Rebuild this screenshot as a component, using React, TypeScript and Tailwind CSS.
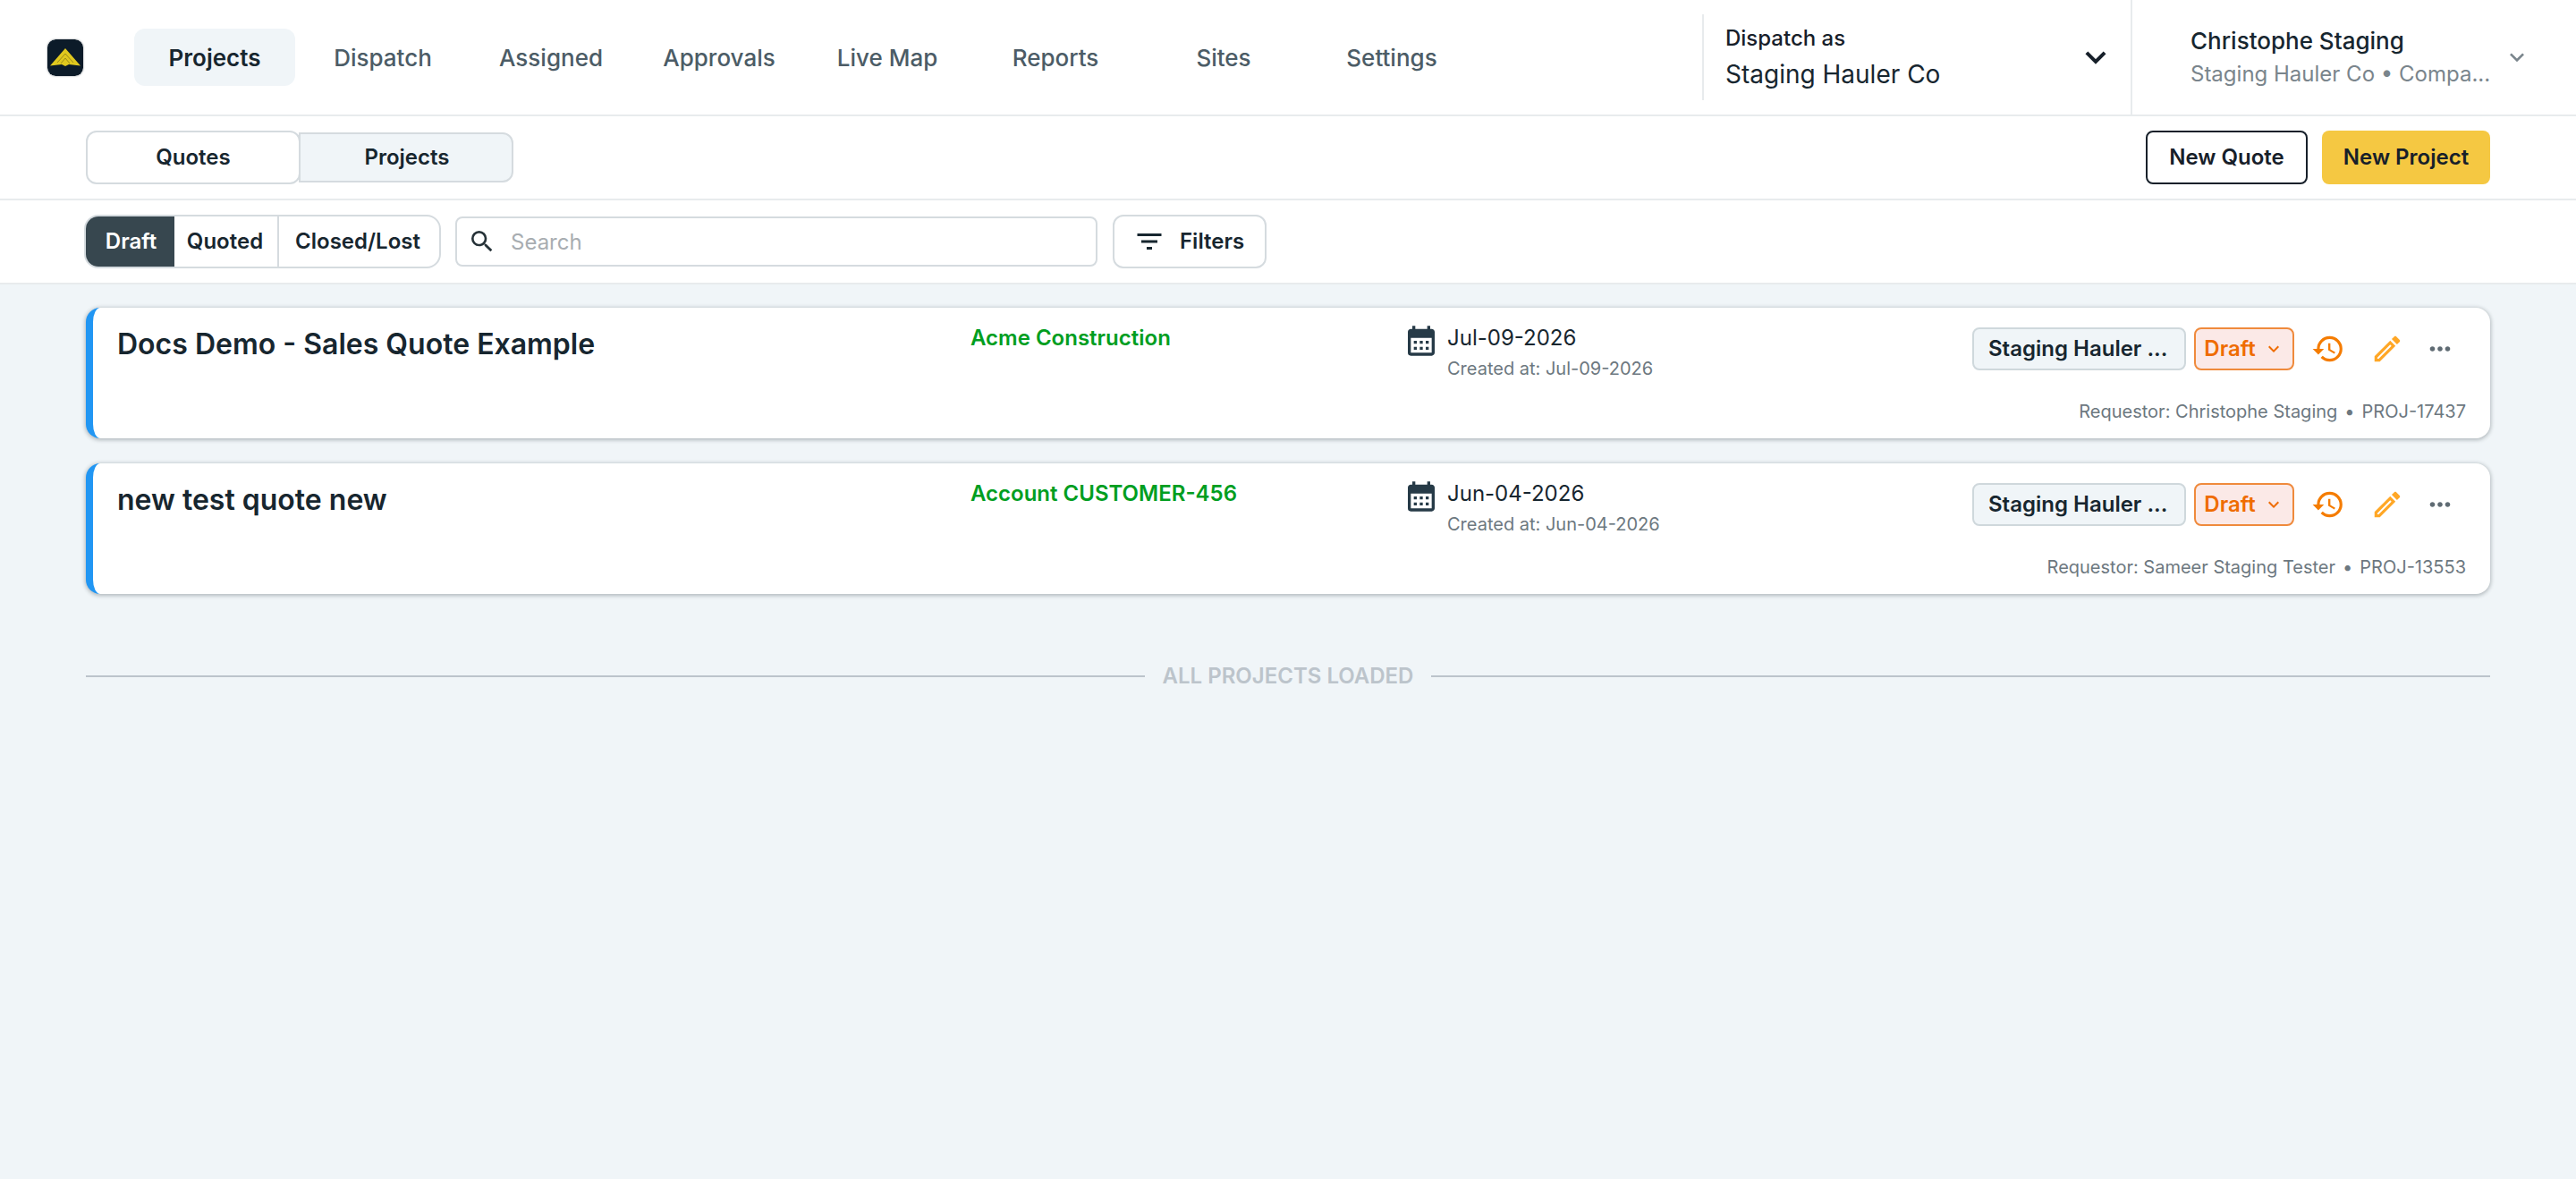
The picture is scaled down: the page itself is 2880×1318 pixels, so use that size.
import { MdCalendarMonth, MdFilterList, MdHistory, MdKeyboardArrowDown, MdMoreHoriz, MdOutlineEdit, MdSearch } from 'react-icons/md';

const navItems = ['Projects', 'Dispatch', 'Assigned', 'Approvals', 'Live Map', 'Reports', 'Sites', 'Settings'];

const quotes = [
  {
    title: 'Docs Demo - Sales Quote Example',
    company: 'Acme Construction',
    date: 'Jul-09-2026',
    requestor: 'Christophe Staging',
    code: 'PROJ-17437',
  },
  {
    title: 'new test quote new',
    company: 'Account CUSTOMER-456',
    date: 'Jun-04-2026',
    requestor: 'Sameer Staging Tester',
    code: 'PROJ-13553',
  },
];

function Logo() {
  return (
    <svg width="40" height="41" viewBox="0 0 40 41" className="shrink-0 rounded-[9px] shadow-[0_0_2px_rgba(38,50,56,0.6)]">
      <rect width="40" height="41" rx="9" fill="#0c1b29" />
      <path d="M20 10 L37 29.5 L24 28 L20 30 L16 28 L3 29.5 Z" fill="#e0c81e" />
      <path d="M20 16 L11 26 M20 16 L29 26 M20 21 L15 27 M20 21 L25 27" stroke="#9c8c18" strokeWidth="1" fill="none" />
    </svg>
  );
}

function QuoteCard({ quote }: { quote: (typeof quotes)[number] }) {
  return (
    <div className="flex h-[146px] rounded-[16px] border-l-8 border-[#2196f3] bg-white pl-[27px] pr-[27px] shadow-[0_1px_4px_1px_rgba(38,50,56,0.3)]">
      <div className="w-[954px] shrink-0 pt-[20px] text-[32px] leading-[42px] font-semibold text-[#17262f]">{quote.title}</div>
      <div className="w-[484px] shrink-0 pt-[18px] text-[24px] leading-[32px] font-semibold text-[#009e1f]">{quote.company}</div>
      <div className="flex flex-1 items-start gap-[9px] pt-[17px]">
        <MdCalendarMonth className="shrink-0 text-[#263a47]" size={40} />
        <div>
          <div className="text-[24px] leading-[34px] text-[#17262f]">{quote.date}</div>
          <div className="mt-[3px] text-[20px] leading-[28px] text-[#6d7880]">Created at: {quote.date}</div>
        </div>
      </div>
      <div className="flex flex-col items-end pt-[22px]">
        <div className="mr-[1px] flex items-center">
          <div className="flex h-[48px] w-[239px] items-center rounded-[8px] border-2 border-[#cfd8dc] bg-[#f0f5f8] pl-[16px] text-[24px] font-semibold text-[#17262f]">
            Staging Hauler ...
          </div>
          <div className="ml-[9px] flex h-[48px] w-[112px] items-center justify-center gap-[8px] rounded-[8px] border-2 border-[#ef8a3c] bg-[#fbe9e7] text-[24px] font-semibold text-[#ef6c00]">
            Draft
            <MdKeyboardArrowDown size={24} />
          </div>
          <button className="ml-[10px] flex h-[48px] w-[56px] items-center justify-center text-[#f57c00]">
            <MdHistory size={38} />
          </button>
          <button className="ml-[10px] flex h-[48px] w-[56px] items-center justify-center text-[#ffa726]">
            <MdOutlineEdit size={38} />
          </button>
          <button className="ml-[3px] flex h-[48px] w-[56px] items-center justify-center text-[#5f6b73]">
            <MdMoreHoriz size={34} />
          </button>
        </div>
        <div className="mt-[32px] text-[20px] leading-[28px] text-[#6d7880]">
          Requestor: {quote.requestor}
          <span className="mx-[8px]">•</span>
          {quote.code}
        </div>
      </div>
    </div>
  );
}

export default function App() {
  return (
    <div className="min-h-screen bg-[#f0f5f8] font-['Inter',sans-serif] text-[#17262f]">
      <header className="flex h-[130px] items-stretch border-b-2 border-[#e8ebed] bg-white">
        <div className="flex items-center pl-[53px]">
          <Logo />
          <nav className="ml-[57px] flex gap-2">
            {navItems.map((item, i) => (
              <a
                key={item}
                className={
                  i === 0
                    ? 'flex h-[64px] w-[180px] items-center justify-center rounded-[12px] bg-[#f0f5f8] text-[26px] font-semibold text-[#17262f]'
                    : 'flex h-[64px] w-[180px] items-center justify-center rounded-[12px] text-[26px] font-medium text-[#4c5c66]'
                }
              >
                {item}
              </a>
            ))}
          </nav>
        </div>
        <div className="ml-auto flex items-stretch">
          <div className="my-[16px] flex w-[479px] items-center justify-between border-l-2 border-[#e8ebed] pl-[24px] pr-[17px]">
            <div>
              <div className="text-[24px] leading-[36px] font-medium text-[#17202a]">Dispatch as</div>
              <div className="mt-[2px] text-[28px] leading-[40px] text-[#17262f]">Staging Hauler Co</div>
            </div>
            <svg width="44" height="44" viewBox="0 0 24 24" fill="none" stroke="#17202a" strokeWidth="2.2" className="shrink-0">
              <path d="M6.5 9.2 L12 14.7 L17.5 9.2" />
            </svg>
          </div>
          <div className="flex w-[498px] items-center justify-between border-l-2 border-[#e8ebed] pl-[65px] pr-[50px]">
            <div className="whitespace-nowrap">
              <div className="text-[26px] leading-[38px] font-medium text-[#17262f]">Christophe Staging</div>
              <div className="text-[24px] leading-[36px] text-[#7a858c]">Staging Hauler Co • Compa...</div>
            </div>
            <MdKeyboardArrowDown className="text-[#7a858c]" size={32} />
          </div>
        </div>
      </header>

      <div className="flex h-[94px] items-center justify-between border-b-2 border-[#e8ebed] bg-white px-[96px]">
        <div className="flex items-center">
          <button className="z-10 h-[60px] w-[240px] rounded-[12px] border-2 border-[#d5dbdf] bg-white text-[24px] font-semibold text-[#17262f]">
            Quotes
          </button>
          <button className="-ml-[2px] h-[56px] w-[240px] rounded-r-[12px] border-2 border-[#d5dbdf] bg-[#f0f5f8] pl-[2px] text-[24px] font-semibold text-[#17262f]">
            Projects
          </button>
        </div>
        <div className="flex items-center gap-[16px]">
          <button className="h-[60px] w-[181px] rounded-[8px] border-2 border-[#17202a] bg-white text-[24px] font-semibold text-[#17202a]">
            New Quote
          </button>
          <button className="h-[60px] w-[188px] rounded-[8px] bg-[#f5c842] text-[24px] font-semibold text-[#17202a]">
            New Project
          </button>
        </div>
      </div>

      <div className="flex h-[94px] items-center border-b-2 border-[#e8ebed] bg-white px-[94px]">
        <div className="flex h-[60px] w-[399px] overflow-hidden rounded-[16px] border-2 border-[#d5dbdf] text-[24px] font-semibold">
          <div className="-m-[2px] flex w-[101px] items-center justify-center bg-[#37474f] pl-[4px] text-white">Draft</div>
          <div className="flex w-[119px] items-center justify-center border-r-2 border-[#d5dbdf] text-[#17262f]">Quoted</div>
          <div className="flex flex-1 items-center justify-center pr-[3px] text-[#17262f]">Closed/Lost</div>
        </div>
        <div className="ml-[16px] flex h-[56px] w-[718px] items-center rounded-[8px] border-2 border-[#d5dbdf] bg-white pl-[12px]">
          <MdSearch className="text-[#263238]" size={32} />
          <span className="ml-[16px] pt-[2px] text-[24px] text-[#a8adb1]">Search</span>
        </div>
        <button className="ml-[17px] flex h-[60px] w-[172px] items-center gap-[16px] rounded-[12px] border-2 border-[#d5dbdf] bg-white pl-[21px] text-[24px] font-semibold text-[#17262f]">
          <MdFilterList size={36} />
          Filters
        </button>
      </div>

      <main className="px-[96px] pt-[26px]">
        <div className="flex flex-col gap-[28px]">
          {quotes.map((quote) => (
            <QuoteCard key={quote.code} quote={quote} />
          ))}
        </div>
        <div className="mt-[78px] flex items-center gap-[20px]">
          <div className="h-[2px] flex-1 bg-[#bcc4cb]" />
          <span className="text-[24px] leading-[28px] font-semibold text-[#bcc4cb] uppercase">All projects loaded</span>
          <div className="h-[2px] flex-1 bg-[#bcc4cb]" />
        </div>
      </main>
    </div>
  );
}
